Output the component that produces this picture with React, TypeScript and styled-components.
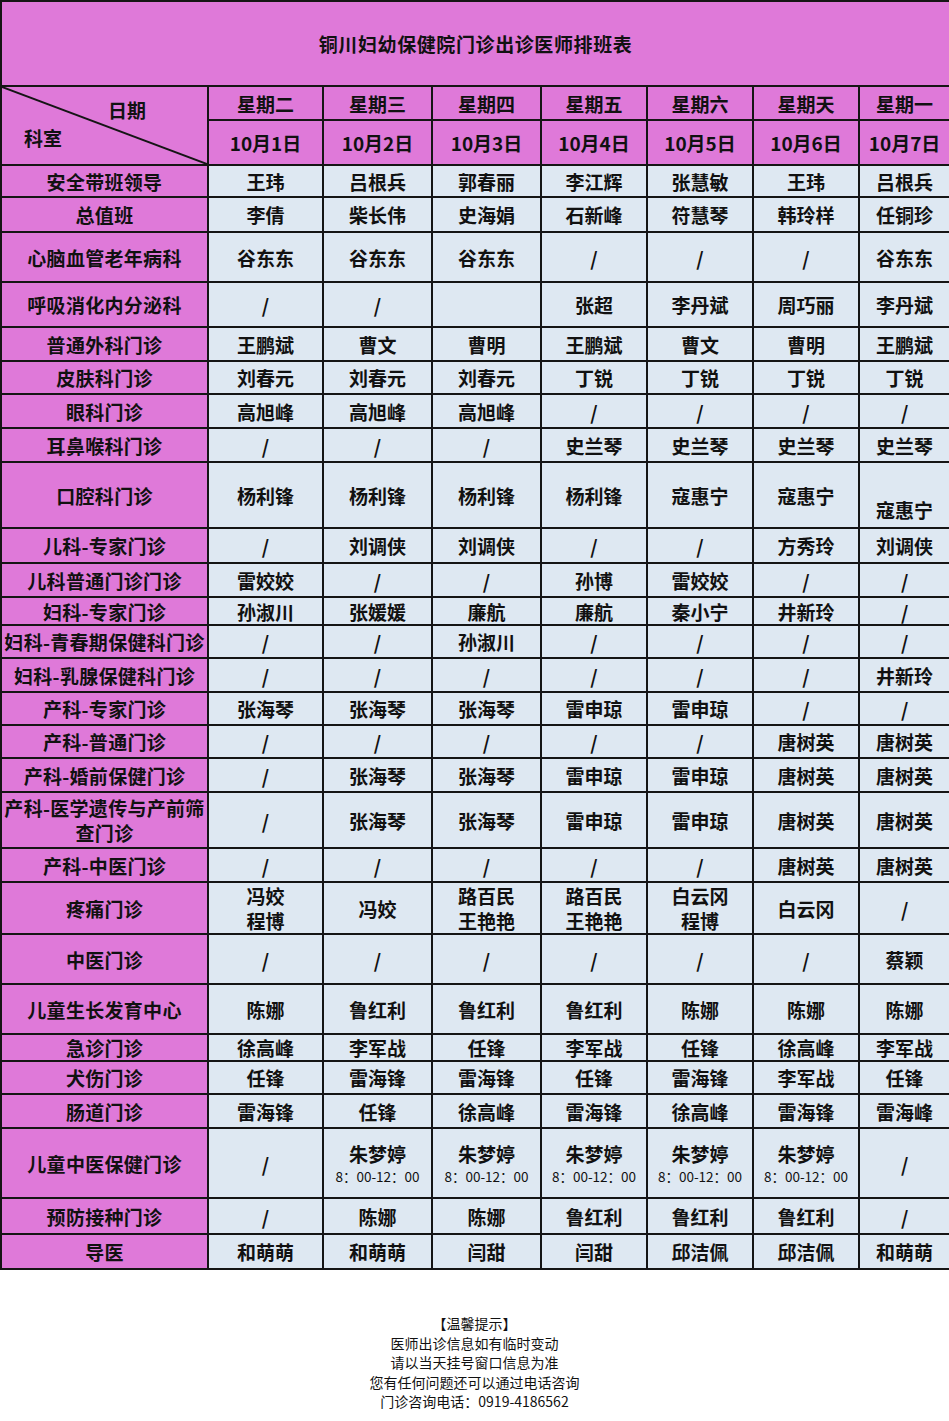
import React from "react";
import styled, { createGlobalStyle } from "styled-components";

const GlobalStyle = createGlobalStyle`
  html, body {
    margin: 0;
    padding: 0;
    background: #ffffff;
  }
  body {
    font-family: "Noto Sans CJK SC", "Noto Sans", sans-serif;
    color: #111;
  }
`;

const pink = "#df79d9";
const light = "#dee8f2";
const line = "2px solid #151515";

const Page = styled.div`
  width: 949px;
  min-height: 1421px;
  background: #fff;
`;

const Sheet = styled.table`
  width: 949px;
  table-layout: fixed;
  border-collapse: collapse;
  border: ${line};
`;

const Row = styled.tr<{ $h: number }>`
  height: ${(p) => p.$h}px;
`;

const Cell = styled.td`
  border: ${line};
  padding: 0;
  text-align: center;
  vertical-align: middle;
  font-size: 19px;
  font-weight: 700;
  line-height: 25px;
  white-space: nowrap;
  overflow: visible;
`;

const TitleCell = styled(Cell)`
  background: ${pink};
  font-size: 19px;
  font-weight: 600;
  letter-spacing: 0.6px;
`;

const HeadCell = styled(Cell)`
  background: ${pink};
`;

const DeptCell = styled(Cell)`
  background: ${pink};
  letter-spacing: 0.3px;
`;

const DataCell = styled(Cell)<{ $low?: boolean }>`
  background: ${light};
  padding-top: ${(p) => (p.$low ? "28px" : "0")};
`;

const CornerCell = styled(HeadCell)`
  position: relative;
`;

const CornerInner = styled.div`
  display: grid;
  grid-template-rows: 1fr 1fr;
  height: 76px;
`;

const CornerLabel = styled.span<{ $side: "top" | "bottom" }>`
  align-self: ${(p) => (p.$side === "top" ? "end" : "start")};
  justify-self: start;
  padding-left: ${(p) => (p.$side === "top" ? "106px" : "22px")};
  margin-top: ${(p) => (p.$side === "top" ? "0" : "-1px")};
  margin-bottom: ${(p) => (p.$side === "top" ? "4px" : "0")};
`;

const Diagonal = styled.svg`
  position: absolute;
  inset: 0;
  width: 100%;
  height: 100%;
  pointer-events: none;
`;

const Time = styled.div`
  font-size: 13.5px;
  font-weight: 400;
  line-height: 20px;
`;

const Footer = styled.div`
  margin-top: 44px;
  display: flex;
  flex-direction: column;
  align-items: center;
  font-size: 14px;
  line-height: 19.6px;
  color: #111;
`;

const days = ["星期二", "星期三", "星期四", "星期五", "星期六", "星期天", "星期一"];
const dates = ["10月1日", "10月2日", "10月3日", "10月4日", "10月5日", "10月6日", "10月7日"];

const zhu = "朱梦婷|8：00-12：00";

type RowData = [string, number, string[]];

const rows: RowData[] = [
  ["安全带班领导", 32, ["王玮", "吕根兵", "郭春丽", "李江辉", "张慧敏", "王玮", "吕根兵"]],
  ["总值班", 35, ["李倩", "柴长伟", "史海娟", "石新峰", "符慧琴", "韩玲样", "任铜珍"]],
  ["心脑血管老年病科", 50, ["谷东东", "谷东东", "谷东东", "/", "/", "/", "谷东东"]],
  ["呼吸消化内分泌科", 45, ["/", "/", "", "张超", "李丹斌", "周巧丽", "李丹斌"]],
  ["普通外科门诊", 34, ["王鹏斌", "曹文", "曹明", "王鹏斌", "曹文", "曹明", "王鹏斌"]],
  ["皮肤科门诊", 33, ["刘春元", "刘春元", "刘春元", "丁锐", "丁锐", "丁锐", "丁锐"]],
  ["眼科门诊", 34, ["高旭峰", "高旭峰", "高旭峰", "/", "/", "/", "/"]],
  ["耳鼻喉科门诊", 34, ["/", "/", "/", "史兰琴", "史兰琴", "史兰琴", "史兰琴"]],
  ["口腔科门诊", 66, ["杨利锋", "杨利锋", "杨利锋", "杨利锋", "寇惠宁", "寇惠宁", "^寇惠宁"]],
  ["儿科-专家门诊", 35, ["/", "刘调侠", "刘调侠", "/", "/", "方秀玲", "刘调侠"]],
  ["儿科普通门诊门诊", 34, ["雷姣姣", "/", "/", "孙博", "雷姣姣", "/", "/"]],
  ["妇科-专家门诊", 28, ["孙淑川", "张媛媛", "廉航", "廉航", "秦小宁", "井新玲", "/"]],
  ["妇科-青春期保健科门诊", 33, ["/", "/", "孙淑川", "/", "/", "/", "/"]],
  ["妇科-乳腺保健科门诊", 34, ["/", "/", "/", "/", "/", "/", "井新玲"]],
  ["产科-专家门诊", 33, ["张海琴", "张海琴", "张海琴", "雷申琼", "雷申琼", "/", "/"]],
  ["产科-普通门诊", 33, ["/", "/", "/", "/", "/", "唐树英", "唐树英"]],
  ["产科-婚前保健门诊", 34, ["/", "张海琴", "张海琴", "雷申琼", "雷申琼", "唐树英", "唐树英"]],
  ["产科-医学遗传与产前筛\n查门诊", 56, ["/", "张海琴", "张海琴", "雷申琼", "雷申琼", "唐树英", "唐树英"]],
  ["产科-中医门诊", 34, ["/", "/", "/", "/", "/", "唐树英", "唐树英"]],
  ["疼痛门诊", 51, ["冯姣\n程博", "冯姣", "路百民\n王艳艳", "路百民\n王艳艳", "白云冈\n程博", "白云冈", "/"]],
  ["中医门诊", 50, ["/", "/", "/", "/", "/", "/", "蔡颖"]],
  ["儿童生长发育中心", 50, ["陈娜", "鲁红利", "鲁红利", "鲁红利", "陈娜", "陈娜", "陈娜"]],
  ["急诊门诊", 27, ["徐高峰", "李军战", "任锋", "李军战", "任锋", "徐高峰", "李军战"]],
  ["犬伤门诊", 33, ["任锋", "雷海锋", "雷海锋", "任锋", "雷海锋", "李军战", "任锋"]],
  ["肠道门诊", 34, ["雷海锋", "任锋", "徐高峰", "雷海锋", "徐高峰", "雷海锋", "雷海峰"]],
  ["儿童中医保健门诊", 70, ["/", zhu, zhu, zhu, zhu, zhu, "/"]],
  ["预防接种门诊", 36, ["/", "陈娜", "陈娜", "鲁红利", "鲁红利", "鲁红利", "/"]],
  ["导医", 35, ["和萌萌", "和萌萌", "闫甜", "闫甜", "邱洁佩", "邱洁佩", "和萌萌"]],
];

const widths = [207, 115, 109, 109, 106, 106, 106, 91];

const Lines = ({ text }: { text: string }) => (
  <>
    {text.split("\n").map((t, i) => (
      <div key={i}>{t}</div>
    ))}
  </>
);

const Value = ({ text }: { text: string }) => {
  if (text.includes("|")) {
    const [name, time] = text.split("|");
    return (
      <>
        <div>{name}</div>
        <Time>{time}</Time>
      </>
    );
  }
  return <Lines text={text} />;
};

const tips = [
  "【温馨提示】",
  "医师出诊信息如有临时变动",
  "请以当天挂号窗口信息为准",
  "您有任何问题还可以通过电话咨询",
  "门诊咨询电话：0919-4186562",
];

export default function App() {
  return (
    <Page>
      <GlobalStyle />
      <Sheet>
        <colgroup>
          {widths.map((w, i) => (
            <col key={i} style={{ width: w }} />
          ))}
        </colgroup>
        <tbody>
          <Row $h={85}>
            <TitleCell colSpan={8}>铜川妇幼保健院门诊出诊医师排班表</TitleCell>
          </Row>
          <Row $h={34}>
            <CornerCell rowSpan={2}>
              <Diagonal viewBox="0 0 100 100" preserveAspectRatio="none">
                <line x1="0" y1="0" x2="100" y2="100" stroke="#151515" strokeWidth="2" vectorEffect="non-scaling-stroke" />
              </Diagonal>
              <CornerInner>
                <CornerLabel $side="top">日期</CornerLabel>
                <CornerLabel $side="bottom">科室</CornerLabel>
              </CornerInner>
            </CornerCell>
            {days.map((d) => (
              <HeadCell key={d}>{d}</HeadCell>
            ))}
          </Row>
          <Row $h={45}>
            {dates.map((d) => (
              <HeadCell key={d}>{d}</HeadCell>
            ))}
          </Row>
          {rows.map(([dept, h, vals]) => (
            <Row key={dept} $h={h}>
              <DeptCell>
                <Lines text={dept} />
              </DeptCell>
              {vals.map((v, i) => {
                const low = v.startsWith("^");
                return (
                  <DataCell key={i} $low={low}>
                    <Value text={low ? v.slice(1) : v} />
                  </DataCell>
                );
              })}
            </Row>
          ))}
        </tbody>
      </Sheet>
      <Footer>
        {tips.map((t) => (
          <div key={t}>{t}</div>
        ))}
      </Footer>
    </Page>
  );
}
